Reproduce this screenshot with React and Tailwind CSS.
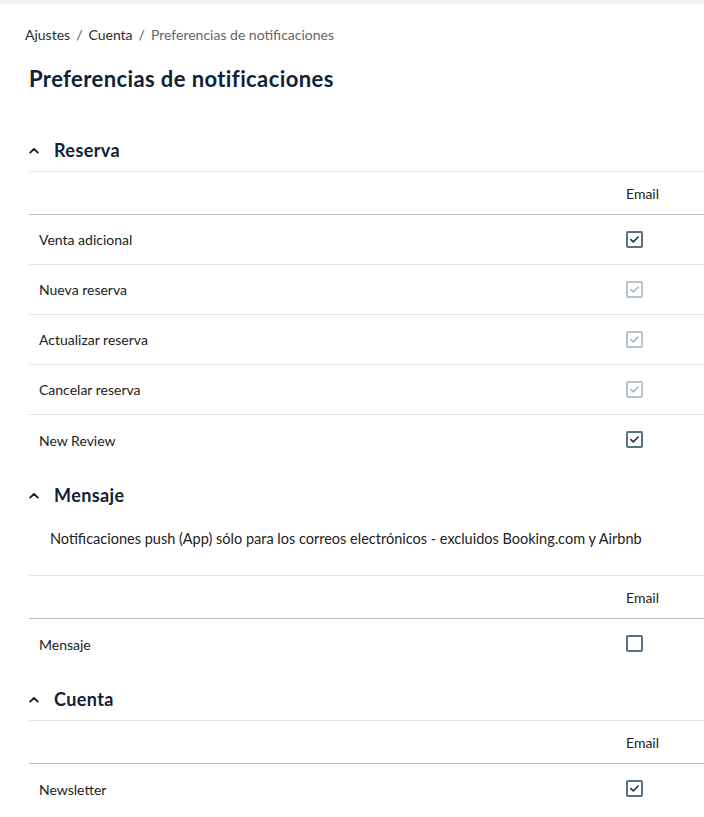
import React from "react";

function Chevron() {
  return (
    <svg width="10" height="7" viewBox="0 0 10 7" className="shrink-0">
      <path d="M1.2 5.6 L5 1.8 L8.8 5.6" fill="none" stroke="#0f2236" strokeWidth="1.9" strokeLinecap="round" strokeLinejoin="round" />
    </svg>
  );
}

function Checkbox({ checked, disabled }) {
  const border = disabled ? "border-[#b7c4cb]" : "border-[#587080]";
  return (
    <div className={`w-[17px] h-[17px] border-2 rounded-[2px] ${border} bg-white flex items-center justify-center`}>
      {checked && (
        <svg width="11" height="9" viewBox="0 0 11 9">
          <path d="M1.8 4.6 L4.3 6.9 L9.2 2" fill="none" stroke={disabled ? "#a9b6bd" : "#1d3550"} strokeWidth="1.6" strokeLinecap="round" strokeLinejoin="round" />
        </svg>
      )}
    </div>
  );
}

function SectionHeader({ title }) {
  return (
    <div className="mt-[9px] h-[42px] flex items-center">
      <div className="w-[25px] flex items-center">
        <Chevron />
      </div>
      <h2 className="text-[18px] tracking-[0.4px] font-bold text-[#0f2236] leading-none">{title}</h2>
    </div>
  );
}

function Table({ rows }) {
  return (
    <div className="border-t border-[#e3e3e3]">
      <div className="grid grid-cols-[1fr_78px] h-[43px] items-center border-b border-[#bcbcbc]">
        <div />
        <div className="text-[14px] text-[#222]">Email</div>
      </div>
      {rows.map((r, i) => (
        <div
          key={r.label}
          className={`grid grid-cols-[1fr_78px] h-[50px] items-center ${i < rows.length - 1 ? "border-b border-[#e3e3e3]" : ""}`}
        >
          <div className="pl-[10px] text-[14px] text-[#222]">{r.label}</div>
          <div className="-mt-[1px]">
            <Checkbox checked={r.checked} disabled={r.disabled} />
          </div>
        </div>
      ))}
    </div>
  );
}

export default function App() {
  return (
    <div className="min-h-[817px] bg-white" style={{ fontFamily: "Lato, 'Open Sans', sans-serif" }}>
      <div className="h-[4px] bg-[#f2f2f2]" />
      <div className="pl-[25px] pt-[21px] text-[14px] leading-[20px] text-[#2b2b2b]">
        <span>Ajustes</span>
        <span className="mx-[6px] text-[#555]">/</span>
        <span>Cuenta</span>
        <span className="mx-[6px] text-[#555]">/</span>
        <span className="text-[#666]">Preferencias de notificaciones</span>
      </div>
      <div className="pl-[29px]">
        <h1 className="mt-[20px] text-[22px] tracking-[0.4px] leading-[28px] font-bold text-[#0f2236]">Preferencias de notificaciones</h1>
        <div className="mt-[27px] flex flex-col">
          <SectionHeader title="Reserva" />
          <Table
            rows={[
              { label: "Venta adicional", checked: true },
              { label: "Nueva reserva", checked: true, disabled: true },
              { label: "Actualizar reserva", checked: true, disabled: true },
              { label: "Cancelar reserva", checked: true, disabled: true },
              { label: "New Review", checked: true },
            ]}
          />
          <SectionHeader title="Mensaje" />
          <div className="pl-[21px] pt-[13px] pb-[26px] text-[14.5px] leading-[20px] text-[#222]">
            Notificaciones push (App) sólo para los correos electrónicos - excluidos Booking.com y Airbnb
          </div>
          <Table rows={[{ label: "Mensaje", checked: false }]} />
          <SectionHeader title="Cuenta" />
          <Table rows={[{ label: "Newsletter", checked: true }]} />
        </div>
      </div>
    </div>
  );
}
